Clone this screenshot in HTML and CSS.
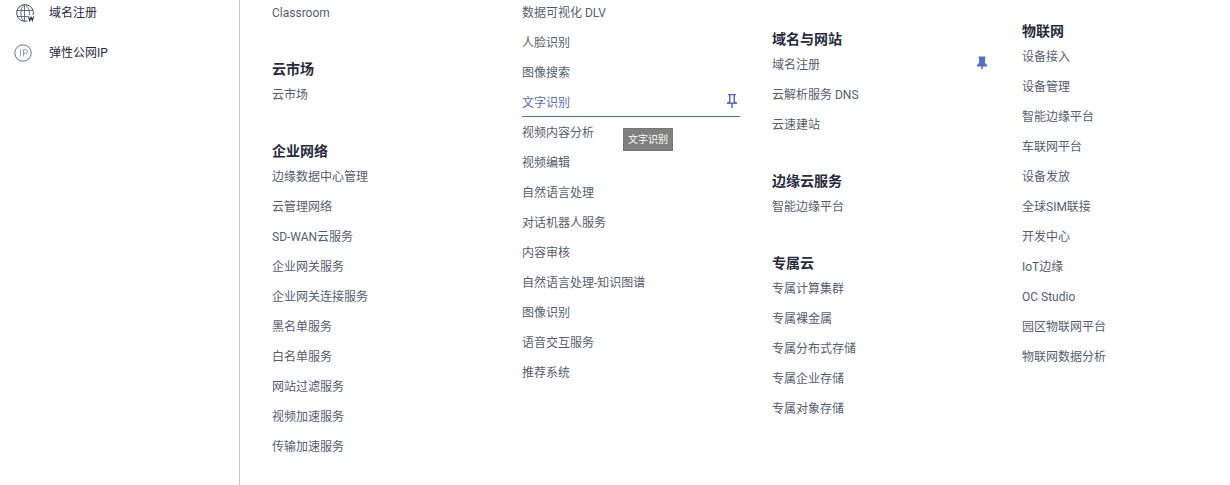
FILE: index.html
```
<!DOCTYPE html>
<html lang="zh-CN">
<head>
  <meta charset="UTF-8">
  <meta name="viewport" content="width=device-width, initial-scale=1.0">
  <title>服务列表</title>
  <link rel="stylesheet" href="styles.css">
</head>
<body>
  <div class="page">
    <nav class="sidebar">
      <a class="sidebar-link" href="#">
        <svg class="sidebar-icon" viewBox="0 0 22 20" fill="none" stroke="#4a4f5e">
          <path d="M14.5 18A8.4 8.4 0 1 1 20.2 12" stroke-width="1"/>
          <path d="M11 2.2C6.8 5 6.8 14.500 11 18.200M12.500 2.200c3.400 2.600 4.300 6 3.900 9.800M11.500 1.700v16.600M3.500 7.500h16.500M4 13.500h11" stroke-width=".8"/>
          <path d="M15.500 13.500l1.200 4 1.300-3.300 1.300 3.300 1.200-4" stroke="#252b3a" stroke-width="1.100"/>
        </svg>
        <span>域名注册</span>
      </a>
      <a class="sidebar-link" href="#">
        <svg class="sidebar-icon" viewBox="0 0 22 20" fill="none">
          <circle cx="10" cy="10" r="8.2" stroke="#4a5068" stroke-width=".8"/>
          <path d="M7.5 6.500v7M10.500 13.500v-7h2a2 2 0 0 1 0 4h-2" stroke="#7f8fd0" stroke-width=".9"/>
        </svg>
        <span>弹性公网IP</span>
      </a>
    </nav>

    <main class="catalog">
      <div class="column">
        <section class="group">
          <ul class="list">
            <li><a class="item" href="#">Classroom</a></li>
          </ul>
        </section>
        <section class="group">
          <h2>云市场</h2>
          <ul class="list">
            <li><a class="item" href="#">云市场</a></li>
          </ul>
        </section>
        <section class="group">
          <h2>企业网络</h2>
          <ul class="list">
            <li><a class="item" href="#">边缘数据中心管理</a></li>
            <li><a class="item" href="#">云管理网络</a></li>
            <li><a class="item" href="#">SD-WAN云服务</a></li>
            <li><a class="item" href="#">企业网关服务</a></li>
            <li><a class="item" href="#">企业网关连接服务</a></li>
            <li><a class="item" href="#">黑名单服务</a></li>
            <li><a class="item" href="#">白名单服务</a></li>
            <li><a class="item" href="#">网站过滤服务</a></li>
            <li><a class="item" href="#">视频加速服务</a></li>
            <li><a class="item" href="#">传输加速服务</a></li>
          </ul>
        </section>
      </div>

      <div class="column">
        <section class="group">
          <ul class="list">
            <li><a class="item" href="#">数据可视化 DLV</a></li>
            <li><a class="item" href="#">人脸识别</a></li>
            <li><a class="item" href="#">图像搜索</a></li>
            <li class="has-tooltip">
              <a class="item active" href="#">
                <span>文字识别</span>
                <svg class="pin" viewBox="0 0 10 14">
                  <path fill="#526ecc" fill-rule="evenodd" d="M1 0h8v1.300H8V7.500l2 1V10H5.800v4H4.200v-4H0V8.500l2-1V1.300H1zM3.500 1.300V8.500h3V1.300z"/>
                </svg>
              </a>
              <span class="tooltip">文字识别</span>
            </li>
            <li><a class="item" href="#">视频内容分析</a></li>
            <li><a class="item" href="#">视频编辑</a></li>
            <li><a class="item" href="#">自然语言处理</a></li>
            <li><a class="item" href="#">对话机器人服务</a></li>
            <li><a class="item" href="#">内容审核</a></li>
            <li><a class="item" href="#">自然语言处理-知识图谱</a></li>
            <li><a class="item" href="#">图像识别</a></li>
            <li><a class="item" href="#">语音交互服务</a></li>
            <li><a class="item" href="#">推荐系统</a></li>
          </ul>
        </section>
      </div>

      <div class="column column-web">
        <section class="group">
          <h2>域名与网站</h2>
          <ul class="list">
            <li>
              <a class="item" href="#">
                <span>域名注册</span>
                <svg class="pin" viewBox="0 0 10 14">
                  <path fill="#526ecc" d="M1.500 .5h7v1.300L8 2v5l2 2v1.500H5.800V13H4.200v-2.500H0V9l2-2V2l-.5-.2z"/>
                </svg>
              </a>
            </li>
            <li><a class="item" href="#">云解析服务 DNS</a></li>
            <li><a class="item" href="#">云速建站</a></li>
          </ul>
        </section>
        <section class="group">
          <h2>边缘云服务</h2>
          <ul class="list">
            <li><a class="item" href="#">智能边缘平台</a></li>
          </ul>
        </section>
        <section class="group">
          <h2>专属云</h2>
          <ul class="list">
            <li><a class="item" href="#">专属计算集群</a></li>
            <li><a class="item" href="#">专属裸金属</a></li>
            <li><a class="item" href="#">专属分布式存储</a></li>
            <li><a class="item" href="#">专属企业存储</a></li>
            <li><a class="item" href="#">专属对象存储</a></li>
          </ul>
        </section>
      </div>

      <div class="column column-iot">
        <section class="group">
          <h2>物联网</h2>
          <ul class="list">
            <li><a class="item" href="#">设备接入</a></li>
            <li><a class="item" href="#">设备管理</a></li>
            <li><a class="item" href="#">智能边缘平台</a></li>
            <li><a class="item" href="#">车联网平台</a></li>
            <li><a class="item" href="#">设备发放</a></li>
            <li><a class="item" href="#">全球SIM联接</a></li>
            <li><a class="item" href="#">开发中心</a></li>
            <li><a class="item" href="#">IoT边缘</a></li>
            <li><a class="item" href="#">OC Studio</a></li>
            <li><a class="item" href="#">园区物联网平台</a></li>
            <li><a class="item" href="#">物联网数据分析</a></li>
          </ul>
        </section>
      </div>
    </main>
  </div>
</body>
</html>
```
FILE: styles.css
```
* {
  box-sizing: border-box;
}
body {
  margin: 0;
  font-family: Roboto, "Noto Sans CJK SC", sans-serif;
  font-size: 12px;
  color: #252b3a;
  background-color: #fff;
}
a {
  color: inherit;
  text-decoration: none;
}
.page {
  display: flex;
  min-height: 100vh;
  overflow: hidden;
}

/* pinned services */
.sidebar {
  flex: none;
  width: 240px;
  padding-left: 13px;
  border-right: 1px solid #c4c6cb;
}
.sidebar-link {
  display: flex;
  align-items: center;
  gap: 14px;
  height: 40px;
  line-height: 20px;
}
.sidebar-link:first-child {
  margin-top: -7px;
}
.sidebar-icon {
  width: 22px;
  height: 20px;
}

/* all services */
.catalog {
  flex: 1;
  display: grid;
  grid-template-columns: repeat(3, 218px) 1fr;
  gap: 32px;
  margin-top: -3px;
  padding-left: 32px;
}
.column-web {
  padding-top: 32px;
}
.column-iot {
  padding-top: 24px;
}
.group {
  margin-bottom: 32px;
}
.group:last-child {
  margin-bottom: 0;
}
h2 {
  margin: 0;
  font-size: 14px;
  font-weight: bold;
  line-height: 20px;
}
.list {
  margin: 0;
  padding: 0;
  list-style: none;
}
.item {
  display: flex;
  align-items: center;
  justify-content: space-between;
  height: 30px;
  padding: 2px 3px 0 0;
  border-bottom: 1px solid transparent;
  color: #575d6c;
  line-height: 20px;
}
.item.active,
.item:hover {
  color: #526ecc;
  border-bottom-color: #526ecc;
}
.pin {
  align-self: flex-start;
  width: 10px;
  height: 14px;
  margin-top: 5px;
}
.has-tooltip {
  position: relative;
}
.tooltip {
  position: absolute;
  top: 41px;
  left: 101px;
  padding: 0 4px;
  border: 1px solid #767676;
  background-color: #808080;
  color: #fff;
  font-size: 10px;
  line-height: 21px;
}
```
